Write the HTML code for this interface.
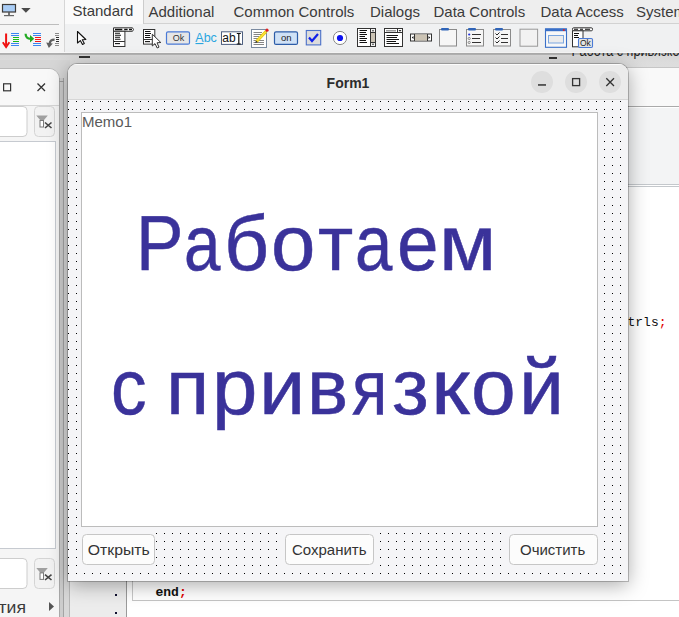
<!DOCTYPE html>
<html><head><meta charset="utf-8">
<style>
*{box-sizing:border-box}
html,body{margin:0;padding:0}
body{width:679px;height:617px;overflow:hidden;position:relative;background:#fff;font-family:"Liberation Sans",sans-serif;color:#333}
.a{position:absolute}
svg{display:block}
</style></head><body>

<!-- ===== background editor window ===== -->
<div class="a" style="left:0;top:53px;width:679px;height:15px;background:linear-gradient(#ababab,#b4b4b4 1.5px,#d8d8d8 2.5px,#dcdcdc 60%,#dedede)"></div>
<svg class="a" style="left:0;top:40px" width="679" height="28">
<text x="571.5" y="16" font-family="Liberation Sans" font-size="14" fill="#222" textLength="115" lengthAdjust="spacingAndGlyphs">Работа с привязкой</text>
<rect x="549" y="17" width="8" height="2" fill="#333"/>
<rect x="79" y="16" width="11" height="2" fill="#333"/>
</svg>
<div class="a" style="left:64px;top:67px;width:615px;height:1px;background:#c6c6c6"></div>
<div class="a" style="left:64px;top:68px;width:615px;height:38px;background:#f9f9f9"></div>
<div class="a" style="left:64px;top:106px;width:615px;height:1px;background:#aaaaaa"></div>
<div class="a" style="left:64px;top:107px;width:615px;height:1px;background:#fff"></div>
<div class="a" style="left:64px;top:108px;width:615px;height:76px;background:#f3f4f5"></div>
<div class="a" style="left:64px;top:184px;width:615px;height:1px;background:#c4c8cc"></div>
<div class="a" style="left:64px;top:186px;width:615px;height:1px;background:#c4c8cc"></div>
<!-- editor strip left -->
<div class="a" style="left:64px;top:72px;width:5px;height:545px;background:#d8d8d8"></div>
<div class="a" style="left:69px;top:72px;width:1px;height:545px;background:#b8b8b8"></div>
<!-- gutter -->
<div class="a" style="left:70px;top:187px;width:57px;height:430px;background:#ececec"></div>
<div class="a" style="left:126px;top:187px;width:1px;height:430px;background:#9a9a9a"></div>
<div class="a" style="left:115px;top:594px;width:2px;height:2px;background:#101030"></div>
<div class="a" style="left:115px;top:612px;width:2px;height:2px;background:#101030"></div>
<!-- current line -->
<div class="a" style="left:132px;top:581px;width:547px;height:20px;border-left:1px solid #c8c8c8;border-bottom:1px solid #c4c4c4;background:#fff"></div>
<svg class="a" style="left:127px;top:300px" width="552" height="317">
<text x="28.5" y="295.6" font-family="Liberation Mono" font-size="13" font-weight="bold" fill="#111">end<tspan fill="#e00000">;</tspan></text>
<text x="500.5" y="25.6" font-family="Liberation Mono" font-size="13" fill="#111">trls<tspan fill="#e00000">;</tspan></text>
</svg>

<!-- ===== left panel ===== -->
<div class="a" style="left:0;top:60px;width:70px;height:30px;background:#d6d6d6"></div>
<div class="a" style="left:-12px;top:68px;width:72px;height:560px;background:#f5f5f5;border-top-right-radius:11px;border:1px solid #b9b9b9"></div>
<div class="a" style="left:0;top:69px;width:59px;height:36px;background:#f8f8f8;border-top-right-radius:10px"></div>
<div class="a" style="left:0;top:105px;width:59px;height:1px;background:#d6d6d6"></div>
<svg class="a" style="left:0;top:69px" width="59" height="548">
<rect x="3.6" y="14.8" width="7" height="7" fill="none" stroke="#333" stroke-width="1.2"/>
<path d="M37.5 14.5L45 22M45 14.5L37.5 22" stroke="#333" stroke-width="1.3"/>
<!-- filter edit top -->
<rect x="-5" y="37.5" width="32" height="30" rx="4" fill="#fff" stroke="#cdcdcd"/>
<rect x="34.5" y="37.5" width="20" height="30" rx="4" fill="#f2f2f2" stroke="#d4d4d4"/>
<path d="M36.3 46.6 H47.8 L43.6 51.5 V52.5 H40.5 V51.5 Z" fill="#a0a0a0"/>
<rect x="40" y="51.5" width="3.5" height="6.5" fill="#fff" stroke="#7a7a7a" stroke-width="1"/>
<path d="M45 53.5L51.5 59M51.5 53.5L45 59" stroke="#444" stroke-width="1.6"/>
<!-- lp listbox -->
<rect x="-5" y="72.5" width="60.5" height="407" fill="#fff" stroke="#c6cad0"/>
<!-- filter edit bottom -->
<rect x="-5" y="489.5" width="32" height="30" rx="4" fill="#fff" stroke="#cdcdcd"/>
<rect x="34.5" y="489.5" width="20" height="30" rx="4" fill="#f2f2f2" stroke="#d4d4d4"/>
<path d="M36.3 499 H47.8 L43.6 503.9 V504.9 H40.5 V503.9 Z" fill="#a0a0a0"/>
<rect x="40" y="503.9" width="3.5" height="6.5" fill="#fff" stroke="#7a7a7a" stroke-width="1"/>
<path d="M45 505.6L51.5 511M51.5 505.6L45 511" stroke="#444" stroke-width="1.6"/>
<text x="-1.5" y="544" font-family="Liberation Sans" font-size="16" fill="#3b3b3b" textLength="27.5" lengthAdjust="spacingAndGlyphs">тия</text>
<path d="M49 533 L54 537.5 L49 542 Z" fill="#555"/>
</svg>
<!-- splitter -->
<div class="a" style="left:59px;top:78px;width:5px;height:539px;background:#cdcdcd;border-left:1px solid #a8a8a8;border-right:1px solid #a4a4a4"></div>
<div class="a" style="left:59px;top:81px;width:5px;height:1px;background:#9a9a9a"></div>
<svg class="a" style="left:0;top:0" width="679" height="53" viewBox="0 0 679 53">
<!-- left speedbutton area -->
<rect x="0" y="0" width="64" height="53" fill="#f5f5f5"/>
<rect x="2.5" y="4.5" width="13" height="7.5" fill="#a9cdf6" stroke="#3c3a38" stroke-width="1.2"/>
<rect x="8.2" y="12" width="1.6" height="3" fill="#555"/>
<rect x="4" y="15" width="10" height="1.2" fill="#666"/>
<path d="M21.2 8 L30.6 8 L25.9 12.7 Z" fill="#4a4a4a"/>
<rect x="0" y="24" width="59" height="1" fill="#bdbdbd"/>
<!-- icon 1: red down arrow + lines -->
<path d="M6.1 33.5 V45" stroke="#f01010" stroke-width="2"/>
<path d="M2.8 42.3 L6.1 47 L9.4 42.3" stroke="#f01010" stroke-width="1.9" fill="none"/>
<g stroke-width="1">
<path d="M11 33.5H19M11 35.5H19M11 43.5H19M11 45.5H19" stroke="#3a86f0"/>
<path d="M13 37.5H19M13 39.5H19M13 41.5H19" stroke="#18b818"/>
<!-- icon 2 -->
<path d="M33 33.5H41M33 35.5H41M33 43.5H41M33 45.5H41" stroke="#3a86f0"/>
<path d="M35 37.5H41M35 39.5H41M35 41.5H41" stroke="#f01818"/>
<!-- icon 3 -->
<path d="M55 33.5H59M55 35.5H59M55 43.5H59M55 45.5H59" stroke="#8a8a8a"/>
<path d="M56 37.5H59M56 39.5H59M56 41.5H59" stroke="#303030"/>
</g>
<path d="M25.6 33.8 C25.6 37.3 27.2 38.8 30.8 38.8" stroke="#22aa22" stroke-width="2.2" fill="none"/>
<path d="M30 35 L34.2 38.8 L30 42.6 Z" fill="#22aa22"/>
<path d="M54.6 39.6 C51.5 39.6 49.8 41 49.6 44" stroke="#606060" stroke-width="2.2" fill="none"/>
<path d="M46.2 42.6 L52.8 43.4 L48.9 47.9 Z" fill="#606060"/>
<rect x="64" y="0" width="1" height="53" fill="#d6d6d6"/>
<!-- palette -->
<rect x="65" y="0" width="614" height="23" fill="#eeeeee"/>
<rect x="65" y="23" width="614" height="1" fill="#d2d2d2"/>
<rect x="65" y="24" width="614" height="29" fill="#f0f1f2"/>
<rect x="65" y="0" width="78" height="24" fill="#fafafa"/>
<rect x="143" y="0" width="1" height="24" fill="#cccccc"/>
<rect x="0" y="52" width="679" height="1" fill="#f8f8f8"/>
<!-- cursor -->
<path d="M77.5 31.5 L77.5 43 L80.3 40.6 L82.5 44.5 L84.3 43.6 L82.3 39.8 L85.8 39.5 Z" fill="#fff" stroke="#111" stroke-width="1.1" stroke-linejoin="round"/>
<!-- main menu -->
<path d="M113.5 27.8 H132.5 Q134.5 29.5 132.5 31.3 H113.5 Z" fill="#fff" stroke="#333" stroke-width="1"/>
<path d="M115 29.5H122.3M124.2 29.5H127.6M129 29.5H132" stroke="#111" stroke-width="1.3"/>
<rect x="113.5" y="31.3" width="11.4" height="15.2" fill="#fff" stroke="#333" stroke-width="1"/>
<path d="M115 33.3H120M115 35.3H121M115 37.3H120M115 39.3H120.5" stroke="#111" stroke-width="1.1"/>
<path d="M113.5 41.5H124.9" stroke="#333" stroke-width="1"/>
<path d="M115 43.6H120" stroke="#111" stroke-width="1.1"/>
<!-- popup menu -->
<rect x="143.5" y="29.5" width="11.3" height="14.6" fill="#fff" stroke="#333" stroke-width="1"/>
<path d="M145 31.5H150.5M145 33.5H151M145 35.5H150M145 37.5H150.5" stroke="#111" stroke-width="1.1"/>
<path d="M143.5 39.5H154.8" stroke="#333" stroke-width="1"/>
<path d="M145 41.6H150" stroke="#111" stroke-width="1.1"/>
<path d="M152.3 34.2 L152.3 46 L155 43.6 L157.2 48 L159 47.1 L157 42.8 L160.8 42.5 Z" fill="#fff" stroke="#333" stroke-width="1" stroke-linejoin="round"/>
<!-- Ok button -->
<rect x="166.5" y="31.8" width="23" height="12.4" rx="1.5" fill="#e6e6e6" stroke="#4a7ad6" stroke-width="1.2"/>
<text x="172.8" y="41" font-family="Liberation Sans" font-size="9" fill="#333">Ok</text>
<!-- Abc -->
<text x="195.3" y="42" font-family="Liberation Sans" font-size="12.5" fill="#2aa6e0">Abc</text>
<rect x="195.5" y="43" width="8" height="1.1" fill="#2aa6e0"/>
<!-- edit -->
<rect x="221.5" y="31.8" width="21" height="12.6" fill="#fff" stroke="#4e6080" stroke-width="1"/>
<text x="222.3" y="42.3" font-family="Liberation Sans" font-size="12" fill="#111">ab</text>
<path d="M236.8 33.5H240.8M238.8 33.5V44M236.8 44H240.8" stroke="#111" stroke-width="1.2"/>
<!-- memo -->
<rect x="251.5" y="29.5" width="15" height="18" fill="#fff" stroke="#7a8aa0" stroke-width="1"/>
<path d="M253.5 32.5H262M253.5 34.5H262M253.5 36.5H259M253.5 38.5H258M253.5 40.5H264M253.5 42.5H264M253.5 44.5H264" stroke="#777" stroke-width="0.9"/>
<path d="M256.5 41.5 L266 31.5" stroke="#e8c800" stroke-width="3"/>
<path d="M256.5 41.5 L266 31.5" stroke="#f8e040" stroke-width="1.6"/>
<circle cx="267" cy="30.2" r="1.6" fill="#e02020"/>
<path d="M255.2 43 L256 40.5 L257.8 42.3 Z" fill="#333"/>
<!-- toggle on -->
<rect x="274.5" y="31.8" width="23" height="12.6" rx="1.5" fill="#cfe1f6" stroke="#2c5ca8" stroke-width="1.2"/>
<text x="281" y="40.6" font-family="Liberation Sans" font-size="9.5" fill="#222">on</text>
<!-- checkbox -->
<rect x="306.3" y="30.5" width="14.4" height="14.4" fill="#dcdcdc" stroke="#4a70c8" stroke-width="1.1"/>
<path d="M309 37.5 L312 41 L318 34" stroke="#1020e8" stroke-width="2.2" fill="none"/>
<!-- radio -->
<circle cx="340" cy="38" r="6.6" fill="#fff" stroke="#888" stroke-width="1"/>
<circle cx="340" cy="38" r="3.1" fill="#0a10f0"/>
<!-- listbox -->
<rect x="357.5" y="28.5" width="18" height="18" fill="#fff" stroke="#333" stroke-width="1"/>
<path d="M359.5 30.5H367M359.5 32.5H366M359.5 34.5H367M359.5 36.5H365M359.5 38.5H367M359.5 40.5H366M359.5 42.5H367" stroke="#111" stroke-width="1"/>
<rect x="370.5" y="28.5" width="5" height="18" fill="#f4f4f4" stroke="#333" stroke-width="1"/>
<rect x="371" y="33" width="4" height="9" fill="#cbc3b4"/>
<path d="M370.5 32.5H375.5M370.5 42.5H375.5" stroke="#333"/>
<path d="M371.8 31.3 L373 29.8 L374.2 31.3 Z M371.8 43.8 L373 45.3 L374.2 43.8 Z" fill="#222"/>
<!-- combobox -->
<rect x="384.5" y="28.5" width="18" height="18" fill="#fff" stroke="#333" stroke-width="1"/>
<path d="M384.5 32.5H402.5" stroke="#333" stroke-width="1"/>
<rect x="386" y="30" width="10" height="1.5" fill="#999"/>
<path d="M397.5 28.5V32.5" stroke="#333"/>
<path d="M398.5 30 L401.5 30 L400 31.7 Z" fill="#222"/>
<path d="M386.5 35.5H398M386.5 37.5H397M386.5 39.5H399M386.5 41.5H396M386.5 43.5H399" stroke="#111" stroke-width="1"/>
<!-- scrollbar -->
<rect x="410.5" y="34" width="21" height="7" fill="#fff" stroke="#333" stroke-width="1"/>
<rect x="415" y="34.5" width="12" height="6" fill="#cbc3b4"/>
<path d="M414.5 34V41M427.5 34V41" stroke="#333"/>
<path d="M413.5 36 L411.8 37.5 L413.5 39 Z M428.5 36 L430.2 37.5 L428.5 39 Z" fill="#111"/>
<!-- groupbox -->
<rect x="439.5" y="29.5" width="17" height="16.5" fill="#f6f6f6" stroke="#8a8a8a" stroke-width="1"/>
<rect x="441" y="28" width="8" height="2.6" rx="1" fill="#2f64b8"/>
<!-- radiogroup -->
<rect x="466.5" y="29.5" width="17" height="16.5" fill="#f6f6f6" stroke="#8a8a8a" stroke-width="1"/>
<rect x="468" y="28" width="8" height="2.6" rx="1" fill="#2f64b8"/>
<circle cx="469.2" cy="34.5" r="1.1" fill="#2030e0"/>
<circle cx="469.2" cy="38.5" r="1.1" fill="none" stroke="#666" stroke-width="0.7"/>
<circle cx="469.2" cy="42.5" r="1.1" fill="none" stroke="#666" stroke-width="0.7"/>
<path d="M472 34.5H481M472 38.5H480M472 42.5H481" stroke="#333" stroke-width="1"/>
<!-- checkgroup -->
<rect x="493.5" y="29.5" width="17" height="16.5" fill="#f6f6f6" stroke="#8a8a8a" stroke-width="1"/>
<rect x="495" y="28" width="8" height="2.6" rx="1" fill="#2f64b8"/>
<path d="M495.5 33.5L497 35L499.5 32.5M495.5 37.5L497 39L499.5 36.5M495.5 41.5L497 43L499.5 40.5" stroke="#222" stroke-width="1" fill="none"/>
<path d="M501 34.5H508M501 38.5H508M501 42.5H508" stroke="#333" stroke-width="1"/>
<!-- panel -->
<rect x="520" y="29.2" width="17.6" height="17" fill="#f2f2f2" stroke="#999" stroke-width="1"/>
<!-- frame -->
<rect x="545.5" y="28.8" width="21" height="18.5" fill="#f8f8f8" stroke="#3a70c8" stroke-width="1.1"/>
<rect x="545.5" y="28.8" width="21" height="2.4" fill="#3a70c8"/>
<circle cx="563.8" cy="30" r="1" fill="#e02020"/>
<rect x="548.5" y="35.5" width="15" height="7.5" fill="#ececec" stroke="#7aa6e0" stroke-width="1"/>
<!-- actionlist -->
<rect x="572.5" y="27.8" width="20" height="3" rx="1.2" fill="#fff" stroke="#333" stroke-width="1"/>
<path d="M574 29.3H578M580 29.3H583M585 29.3H590" stroke="#111" stroke-width="1.1"/>
<rect x="572.5" y="30.8" width="10.5" height="16" fill="#fff" stroke="#333" stroke-width="1"/>
<path d="M574 33.5H579M574 35.5H578M574 37.5H579" stroke="#111" stroke-width="1"/>
<rect x="578.5" y="38.5" width="14" height="9" rx="1.2" fill="#e4e4e4" stroke="#4a7ad6" stroke-width="1.1"/>
<text x="580" y="46.3" font-family="Liberation Sans" font-size="8.5" fill="#222">Ok</text>
</svg>



<!-- ===== Form1 ===== -->
<div class="a" style="left:68px;top:64px;width:560px;height:517px;border-radius:9px 9px 0 0;box-shadow:0 4px 20px rgba(0,0,0,.34),0 0 0 1px rgba(0,0,0,.22);background:#f5f5f7;overflow:hidden">
  <div class="a" style="left:0;top:0;width:560px;height:36px;background:#ebebeb;border-bottom:1px solid #d6d6d6;box-shadow:inset 0 1px 0 #fbfbfb"></div>
</div>
<svg class="a" style="left:68px;top:64px" width="560" height="517">
<defs><pattern id="dp" x="0" y="37" width="8" height="8" patternUnits="userSpaceOnUse"><rect x="0" y="0" width="1" height="1" fill="#000"/></pattern></defs>
<rect x="0" y="37" width="556" height="480" fill="url(#dp)"/>
<text x="258.6" y="24" font-family="Liberation Sans" font-size="14" font-weight="bold" fill="#2c2c2c">Form1</text>
<circle cx="474" cy="18" r="11" fill="#dedede"/>
<circle cx="508" cy="18" r="11" fill="#dedede"/>
<circle cx="542" cy="18" r="11" fill="#dedede"/>
<rect x="470" y="20.2" width="8" height="1.5" fill="#333"/>
<rect x="504.6" y="14.6" width="7" height="7" fill="none" stroke="#333" stroke-width="1.3"/>
<path d="M538.3 14.3L546 22M546 14.3L538.3 22" stroke="#333" stroke-width="1.3"/>
<!-- memo -->
<rect x="13.5" y="48.5" width="516" height="414" fill="#fff" stroke="#bcbcbc"/>
<text x="14" y="63.3" font-family="Liberation Sans" font-size="14.5" fill="#5a5a5a" textLength="50" lengthAdjust="spacingAndGlyphs">Memo1</text>
<!-- buttons -->
<rect x="13" y="468" width="75" height="35" fill="#f5f5f7"/>
<rect x="216" y="468" width="90" height="35" fill="#f5f5f7"/>
<rect x="439" y="468" width="91" height="35" fill="#f5f5f7"/>
<rect x="14.5" y="470.5" width="72" height="30" rx="4" fill="#fcfcfc" stroke="#c6c6c6"/>
<text x="19.8" y="491" font-family="Liberation Sans" font-size="15" fill="#333" textLength="62" lengthAdjust="spacingAndGlyphs">Открыть</text>
<rect x="217.5" y="470.5" width="88" height="30" rx="4" fill="#fcfcfc" stroke="#c6c6c6"/>
<text x="224" y="491" font-family="Liberation Sans" font-size="15" fill="#333">Сохранить</text>
<rect x="441.5" y="470.5" width="88" height="30" rx="4" fill="#fcfcfc" stroke="#c6c6c6"/>
<text x="452" y="491" font-family="Liberation Sans" font-size="15" fill="#333">Очистить</text>
</svg>

<!-- tabs text -->
<svg class="a" style="left:0;top:0" width="679" height="24">
<g font-family="Liberation Sans" font-size="15" fill="#3b3b3b">
<text x="72.5" y="16">Standard</text>
<text x="148.5" y="17">Additional</text>
<text x="233.5" y="17">Common Controls</text>
<text x="370" y="17">Dialogs</text>
<text x="433.5" y="17">Data Controls</text>
<text x="540.5" y="17">Data Access</text>
<text x="636" y="17">System</text>
</g>
</svg>

<!-- big text -->
<div class="a" style="left:0;top:0;width:679px;height:617px;font-size:78px;line-height:1;color:#3a329a;-webkit-text-stroke:0.5px #3a329a">
<span class="a" style="left:136.43px;top:204px;transform:scaleX(0.912);transform-origin:0 0">Р</span>
<span class="a" style="left:184.2px;top:204px;transform:scaleX(0.84);transform-origin:0 0">а</span>
<span class="a" style="left:223.87px;top:204px;transform:scaleX(1.008);transform-origin:0 0">б</span>
<span class="a" style="left:271.24px;top:204px;transform:scaleX(1.022);transform-origin:0 0">о</span>
<span class="a" style="left:317.61px;top:204px;transform:scaleX(0.985);transform-origin:0 0">т</span>
<span class="a" style="left:355.2px;top:204px;transform:scaleX(0.86);transform-origin:0 0">а</span>
<span class="a" style="left:396.63px;top:204px;transform:scaleX(0.957);transform-origin:0 0">е</span>
<span class="a" style="left:438.66px;top:204px;transform:scaleX(1.068);transform-origin:0 0">м</span>
<span class="a" style="left:111.46px;top:348px;transform:scaleX(0.912);transform-origin:0 0">с</span>
<span class="a" style="left:166.07px;top:348px;transform:scaleX(1.025);transform-origin:0 0">п</span>
<span class="a" style="left:212.17px;top:348px;transform:scaleX(1.046);transform-origin:0 0">р</span>
<span class="a" style="left:258.88px;top:348px;transform:scaleX(1.064);transform-origin:0 0">и</span>
<span class="a" style="left:306.53px;top:348px;transform:scaleX(0.994);transform-origin:0 0">в</span>
<span class="a" style="left:351.76px;top:348px;transform:scaleX(0.836);transform-origin:0 0">я</span>
<span class="a" style="left:391.64px;top:348px;transform:scaleX(1.029);transform-origin:0 0">з</span>
<span class="a" style="left:430.63px;top:348px;transform:scaleX(1.133);transform-origin:0 0">к</span>
<span class="a" style="left:471.41px;top:348px;transform:scaleX(1.030);transform-origin:0 0">о</span>
<span class="a" style="left:518.73px;top:348px;transform:scaleX(1.033);transform-origin:0 0">й</span>
</div>
</body></html>
